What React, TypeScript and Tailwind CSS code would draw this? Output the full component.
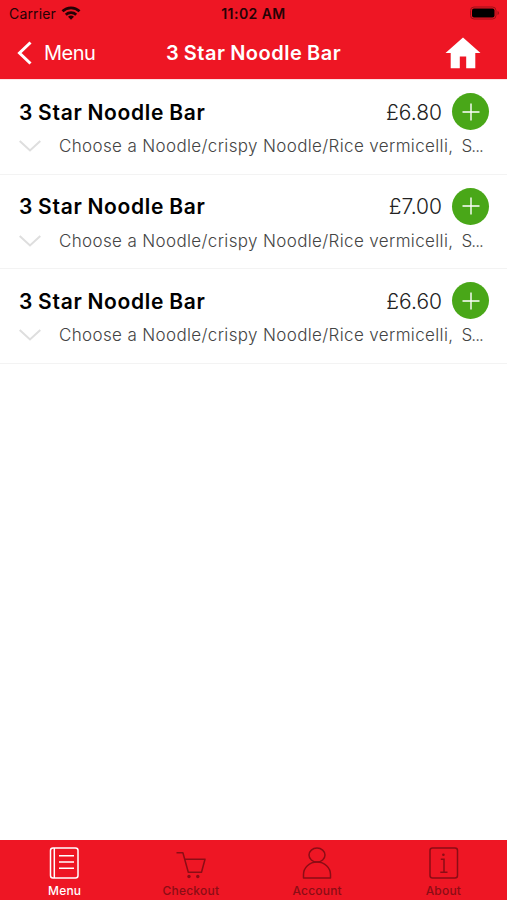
import type { ReactNode } from "react";
import { clsx } from "clsx";

type MenuItem = {
  id: number;
  name: string;
  price: string;
};

const items: MenuItem[] = [
  { id: 1, name: "3 Star Noodle Bar", price: "£6.80" },
  { id: 2, name: "3 Star Noodle Bar", price: "£7.00" },
  { id: 3, name: "3 Star Noodle Bar", price: "£6.60" }
];

function TabIcon({ children }: { children: ReactNode }) {
  return (
    <svg viewBox="0 0 32 34" className="h-[34px] w-8" fill="none" stroke="currentColor" strokeWidth="1.5">
      {children}
    </svg>
  );
}

const tabs = [
  {
    label: "Menu",
    active: true,
    icon: (
      <TabIcon>
        <rect x="1.5" y="2" width="27.5" height="30" rx="2.5" />
        <path d="M5.3 2v30M10 9.8h15M10 16h15M10 22.2h15" />
      </TabIcon>
    )
  },
  {
    label: "Checkout",
    active: false,
    icon: (
      <TabIcon>
        <path d="M1.5 6.7h6.4l5.4 19.6h13.2l3.5-13H9.8" strokeLinejoin="round" />
        <circle cx="14" cy="30.5" r="1.7" fill="currentColor" stroke="none" />
        <circle cx="22.8" cy="30.5" r="1.7" fill="currentColor" stroke="none" />
      </TabIcon>
    )
  },
  {
    label: "Account",
    active: false,
    icon: (
      <TabIcon>
        <ellipse cx="15" cy="9.1" rx="8" ry="7" />
        <path d="M1.5 32v-3.4c0-7.1 5.9-12.5 13.5-12.5s13.5 5.4 13.5 12.5V32z" strokeLinejoin="round" />
      </TabIcon>
    )
  },
  {
    label: "About",
    active: false,
    icon: (
      <TabIcon>
        <rect x="2" y="2" width="27.5" height="30" rx="2.5" />
        <path d="M12.8 13.2H16v13M12.3 26.3h7.2" />
        <circle cx="15.4" cy="8.8" r="1.3" fill="currentColor" stroke="none" />
      </TabIcon>
    )
  }
];

function StatusBar() {
  return (
    <div className="grid h-[27px] grid-cols-3 items-center pl-[9px] pr-[7px] text-sm text-[#250205]">
      <div className="flex items-center gap-[5px]">
        <span className="tracking-[0.15px]">Carrier</span>
        <svg viewBox="0 0 20 14" className="-mt-px h-[14px] w-5" fill="none" stroke="currentColor" strokeWidth="2.7">
          <path d="M1.5 5.3a12.2 12.2 0 0 1 17 0M4.8 8.7a7.5 7.5 0 0 1 10.4 0" />
          <path d="M7 10.8a4.4 4.4 0 0 1 6 0L10 13.8z" fill="currentColor" stroke="none" />
        </svg>
      </div>
      <span className="-ml-[2px] whitespace-nowrap text-center font-semibold tracking-[0.45px]">11:02 AM</span>
      <svg viewBox="0 0 31 14" className="-mt-px h-[14px] w-[31px] justify-self-end">
        <rect x="1.5" y="1" width="25.5" height="12" rx="3.5" fill="none" stroke="#9c1018" />
        <rect x="3" y="2.5" width="22.5" height="9" rx="2" fill="#000" />
        <path d="M28.5 5v4q1.6-.5 1.6-2t-1.6-2z" fill="#9c1018" />
      </svg>
    </div>
  );
}

function NavBar() {
  return (
    <div className="grid h-[51px] grid-cols-[140px_1fr_140px] items-center text-white">
      <button className="flex items-center gap-[12px] pl-[17px]">
        <svg viewBox="0 0 15 24" className="h-6 w-[15px]" fill="none" stroke="currentColor" strokeWidth="3">
          <path d="M13.5 1.5 2.5 12l11 10.5" />
        </svg>
        <span className="text-[20px] font-normal leading-6 tracking-[-0.5px]">Menu</span>
      </button>
      <h1 className="whitespace-nowrap text-center text-[20px] font-semibold leading-6 tracking-[0.5px] [word-spacing:-0.8px]">
        3 Star Noodle Bar
      </h1>
      <button className="justify-self-end pr-[26px]">
        <svg viewBox="0 0 36 32" className="h-8 w-9" fill="currentColor">
          <path d="M18 .5 35.5 16h-5.2v15.2h-9.1V19.5h-6.4v11.7H5.7V16H.5z" />
        </svg>
      </button>
    </div>
  );
}

function ItemRow({ item }: { item: MenuItem }) {
  return (
    <li className="h-[94.5px] border-b border-[#f3f3f3] pl-[19px] pr-[18px] pt-[13px]">
      <div className="flex h-[37px] items-center">
        <h2 className="flex-1 whitespace-nowrap pt-[2px] text-[21px] font-semibold tracking-[0.7px] text-black [word-spacing:-1px]">
          {item.name}
        </h2>
        <span className="mr-[10px] pt-[2px] text-[21px] font-light text-[#222]">{item.price}</span>
        <button className="flex size-[37px] items-center justify-center rounded-full bg-[#49a718] text-white">
          <svg viewBox="0 0 18 18" className="size-[18px]" stroke="currentColor" strokeWidth="1.4">
            <path d="M9 .5v17M.5 9h17" />
          </svg>
        </button>
      </div>
      <div className="mt-[3px] flex h-[26px] items-center">
        <svg viewBox="0 0 22 12" className="mr-[18px] h-3 w-[22px] shrink-0" fill="none" stroke="#dedede" strokeWidth="2">
          <path d="m.7 1 10.3 9.5L21.3 1" />
        </svg>
        <p className="flex gap-[8px] whitespace-nowrap pt-[2px] text-[17px] font-light text-[#444]">
          <span className="tracking-[0.36px]">Choose a Noodle/crispy Noodle/Rice vermicelli,</span>
          <span className="tracking-[-0.9px]">S...</span>
        </p>
      </div>
    </li>
  );
}

export default function App() {
  return (
    <div className="flex h-screen flex-col overflow-hidden bg-white font-['Inter','Liberation_Sans',sans-serif]">
      <header className="h-[79px] shrink-0 bg-[#ee1624]">
        <StatusBar />
        <NavBar />
      </header>

      <ul className="flex-1 border-t border-[#fde4e6]">
        {items.map((item) => (
          <ItemRow key={item.id} item={item} />
        ))}
      </ul>

      <nav className="grid h-[60px] shrink-0 grid-cols-4 bg-[#ee1624] pl-[2px]">
        {tabs.map(({ label, active, icon }) => (
          <a
            key={label}
            className={clsx("flex flex-col items-center pt-[6px]", active ? "text-white" : "text-[#8b0d15]")}
          >
            {icon}
            <span className="-ml-px mt-[2px] text-[12px] font-medium leading-[18px] tracking-[0.2px]">{label}</span>
          </a>
        ))}
      </nav>
    </div>
  );
}
